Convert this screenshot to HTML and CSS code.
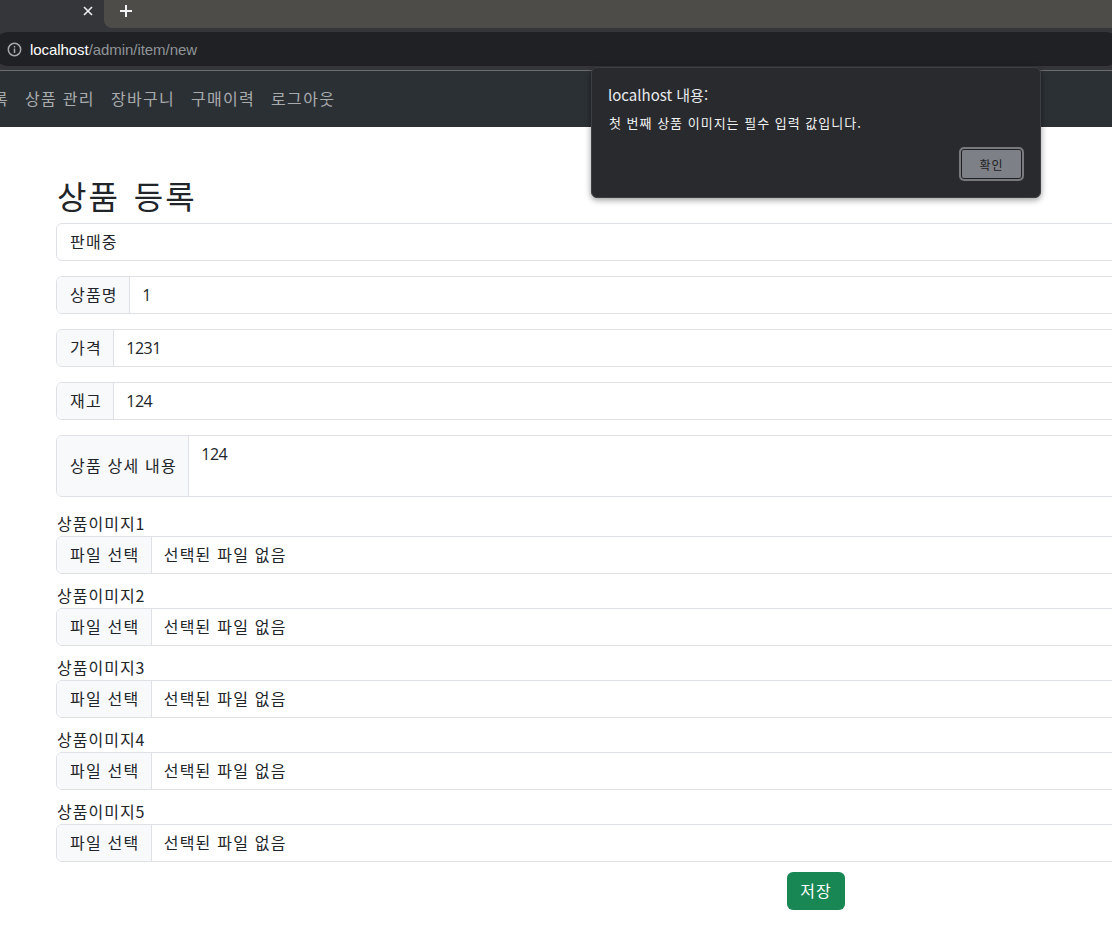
FILE: index.html
```html
<!DOCTYPE html>
<html lang="ko">
<head>
<meta charset="utf-8">
<title>상품 등록</title>
<link rel="stylesheet" href="styles.css">
</head>
<body>
<div class="tabstrip">
  <div class="tab">
    <svg class="tab-close" width="10" height="10" viewBox="0 0 10 10"><path d="M1 1l8 8M9 1l-8 8" stroke="#e8eaed" stroke-width="1.7"/></svg>
  </div>
  <div class="strip-rest">
    <svg class="newtab" width="14" height="14" viewBox="0 0 14 14"><path d="M7 1v12M1 7h12" stroke="#f1f3f4" stroke-width="2"/></svg>
  </div>
</div>
<div class="toolbar">
  <div class="omnibox">
    <svg class="info" width="15" height="15" viewBox="0 0 15 15"><circle cx="7.5" cy="7.5" r="6.2" fill="none" stroke="#a6a9ac" stroke-width="1.5"/><path d="M7.5 6.6v4.4M7.5 4v1.4" stroke="#a6a9ac" stroke-width="1.5"/></svg>
    <span class="host">localhost</span><span class="path">/admin/item/new</span>
  </div>
</div>
<nav class="navbar">
  <span class="nav-link clip">록</span>
  <span class="nav-link">상품 관리</span>
  <span class="nav-link">장바구니</span>
  <span class="nav-link">구매이력</span>
  <span class="nav-link">로그아웃</span>
</nav>
<main class="content">
  <h2 class="title">상품 등록</h2>
  <div class="field select-box">판매중</div>
  <div class="field group"><span class="addon">상품명</span><span class="value num">1</span></div>
  <div class="field group"><span class="addon">가격</span><span class="value num">1231</span></div>
  <div class="field group"><span class="addon">재고</span><span class="value num">124</span></div>
  <div class="field group tall"><span class="addon">상품 상세 내용</span><span class="value num top">124</span></div>
  <div class="file-row"><div class="file-label">상품이미지1</div><div class="group file"><span class="addon">파일 선택</span><span class="value">선택된 파일 없음</span></div></div>
  <div class="file-row"><div class="file-label">상품이미지2</div><div class="group file"><span class="addon">파일 선택</span><span class="value">선택된 파일 없음</span></div></div>
  <div class="file-row"><div class="file-label">상품이미지3</div><div class="group file"><span class="addon">파일 선택</span><span class="value">선택된 파일 없음</span></div></div>
  <div class="file-row"><div class="file-label">상품이미지4</div><div class="group file"><span class="addon">파일 선택</span><span class="value">선택된 파일 없음</span></div></div>
  <div class="file-row"><div class="file-label">상품이미지5</div><div class="group file"><span class="addon">파일 선택</span><span class="value">선택된 파일 없음</span></div></div>
  <div class="actions"><button class="save" type="button">저장</button></div>
</main>
<div class="dialog">
  <div class="dialog-title">localhost 내용:</div>
  <div class="dialog-msg">첫 번째 상품 이미지는 필수 입력 값입니다.</div>
  <div class="dialog-actions"><button class="ok" type="button">확인</button></div>
</div>
</body>
</html>
```
FILE: styles.css
```css
* { box-sizing: border-box; }
html, body { margin: 0; height: 937px; overflow: hidden; }
body { width: 1112px; background: #fff; color: #212529; font: 16px/24px "Noto Sans CJK KR", "Liberation Sans", sans-serif; letter-spacing: 1.2px; position: relative; }
.tabstrip { height: 28px; background: #35363a; display: flex; }
.tab { width: 104px; height: 22px; display: flex; justify-content: flex-end; align-items: center; padding-right: 11px; }
.strip-rest { flex: 1; background: #4e4c49; border-bottom-left-radius: 8px; padding: 4px 0 0 15px; }
.newtab { display: block; }
.toolbar { height: 43px; background: #35363a; padding: 4px 0 0; border-bottom: 1px solid #6a6c70; overflow: hidden; }
.omnibox { height: 34px; margin-left: -8px; width: 1130px; background: #202124; border-radius: 17px; display: flex; align-items: center; padding-left: 15px; font: 15px "Liberation Sans", sans-serif; letter-spacing: -0.06px; }
.info { margin-right: 8px; }
.host { color: #fff; }
.path { color: #8f9499; }
.navbar { height: 56px; background: #2b3035; display: flex; align-items: center; gap: 16px; overflow: hidden; letter-spacing: 1.3px; }
.nav-link { color: rgba(255,255,255,.6); white-space: nowrap; padding-bottom: 2px; }
.clip { margin-left: -7px; }
.content { padding: 0 0 0 56px; width: 1112px; overflow: hidden; }
.title { margin: 49px 0 5px; padding-left: 1px; font-size: 32px; line-height: 38px; font-weight: 400; height: 42px; letter-spacing: 2px; word-spacing: 3px; }
.field, .file { display: flex; width: 1074px; height: 38px; border: 1px solid #dee2e6; border-radius: 6px; background: #fff; }
.field { margin-bottom: 15px; }
.select-box { align-items: center; padding: 0 0 2px 13px; }
.group { align-items: stretch; }
.addon { background: #f8f9fa; border-right: 1px solid #dee2e6; padding: 0 11.4px 2px 13px; display: flex; align-items: center; border-radius: 5px 0 0 5px; white-space: nowrap; }
.value { padding: 0 12px 2px 12px; display: flex; align-items: center; }
.num { font: 16px/24px "Open Sans", sans-serif; letter-spacing: -0.5px; color: #212529; padding-bottom: 0; }
.tall { height: 62px; }
.value.top { align-items: flex-start; padding-top: 6px; }
.file-row { margin-bottom: 10px; }
.file-label { height: 24px; line-height: 22px; padding-left: 1px; letter-spacing: 1px; }
.actions { width: 1520px; display: flex; justify-content: center; }
.save { height: 38px; width: 58px; padding: 0 0 2px; border: 0; border-radius: 6px; background: #198754; color: #fff; font: inherit; letter-spacing: 1px; }
.dialog { position: absolute; left: 591px; top: 67px; width: 450px; height: 131px; background: #292a2d; border-radius: 6px; border: 1px solid #3c4043; box-shadow: 0 2px 6px rgba(0,0,0,.4); padding: 15px 16px 0; color: #e8eaed; letter-spacing: 0; }
.dialog-title { font-size: 15px; line-height: 24px; }
.dialog-msg { font-size: 13px; line-height: 18px; margin-top: 7px; letter-spacing: 1px; padding-left: 1px; color: #f1f3f4; }
.dialog-actions { display: flex; justify-content: flex-end; margin-top: 15px; }
.ok { width: 65px; height: 34px; background: #7d8086; border: 2px solid #77797d; box-shadow: inset 0 0 0 1px #202124; border-radius: 5px; color: #202124; font: 12px "Noto Sans CJK KR", sans-serif; letter-spacing: 1px; padding: 0; }
```
